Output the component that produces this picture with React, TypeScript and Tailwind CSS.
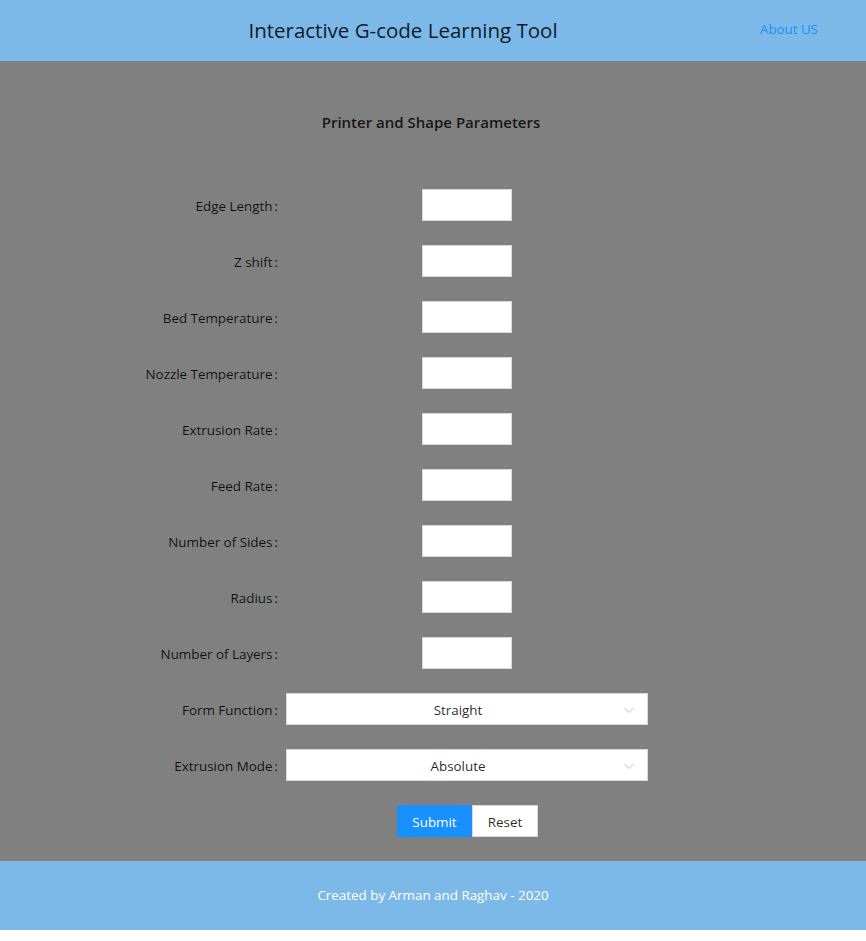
import React from "react";

const fields = [
  "Edge Length",
  "Z shift",
  "Bed Temperature",
  "Nozzle Temperature",
  "Extrusion Rate",
  "Feed Rate",
  "Number of Sides",
  "Radius",
  "Number of Layers",
];

function Chevron() {
  return (
    <svg width="12" height="12" viewBox="0 0 12 12" fill="none" className="absolute right-[12px] top-[10px]">
      <path d="M1.5 4 L6 8.5 L10.5 4" stroke="#bfbfbf" strokeWidth="1" />
    </svg>
  );
}

function Row({ label, children }: { label: string; children: React.ReactNode }) {
  return (
    <div className="flex items-center h-[32px] mb-[24px]">
      <div className="w-[286px] text-right text-[13.4px] leading-[20px] pt-[2px] text-[rgba(0,0,0,0.88)] pr-[8px]">
        {label}
        <span className="ml-[2px] mr-[0px]">:</span>
      </div>
      <div className="w-[362px] flex justify-center">{children}</div>
    </div>
  );
}

export default function App() {
  return (
    <div className="w-[866px] min-h-[941px] bg-white" style={{ fontFamily: '"Open Sans", "Noto Sans", sans-serif' }}>
      <header className="h-[61px] bg-[#7db9e8] flex items-center">
        <div className="flex-1 pl-[46px] text-center text-[20.5px] text-[#0d1b2a] font-medium">
          Interactive G-code Learning Tool
        </div>
        <a className="w-[106px] text-[13.3px] text-[#1890ff] pb-[2px]">About US</a>
      </header>
      <main className="h-[800px] bg-[#808080] pt-[50px]">
        <div className="text-center text-[15px] font-semibold text-[rgba(0,0,0,0.85)] h-[22px] leading-[22px] pr-[4px]">
          Printer and Shape Parameters
        </div>
        <div className="mt-[56px]">
          {fields.map((f) => (
            <Row key={f} label={f}>
              <div className="w-[90px] h-[32px] bg-white border border-[#d9d9d9]" />
            </Row>
          ))}
          <Row label="Form Function">
            <div className="relative w-[362px] h-[32px] bg-white border border-[#d9d9d9] flex items-center justify-center pr-[18px] pt-[2px] text-[13.4px] text-[rgba(0,0,0,0.85)]">
              Straight
              <Chevron />
            </div>
          </Row>
          <Row label="Extrusion Mode">
            <div className="relative w-[362px] h-[32px] bg-white border border-[#d9d9d9] flex items-center justify-center pr-[18px] pt-[2px] text-[13.4px] text-[rgba(0,0,0,0.85)]">
              Absolute
              <Chevron />
            </div>
          </Row>
          <div className="flex pl-[397px]">
            <button className="w-[75px] h-[32px] bg-[#1890ff] text-white text-[13.4px] pt-[2px] border border-[#1890ff]">Submit</button>
            <button className="w-[66px] h-[32px] bg-white text-[rgba(0,0,0,0.85)] text-[13.4px] pt-[2px] border border-[#d9d9d9]">Reset</button>
          </div>
        </div>
      </main>
      <footer className="h-[69px] bg-[#7db9e8] flex items-center justify-center text-[13.4px] text-white">
        Created by Arman and Raghav - 2020
      </footer>
    </div>
  );
}
